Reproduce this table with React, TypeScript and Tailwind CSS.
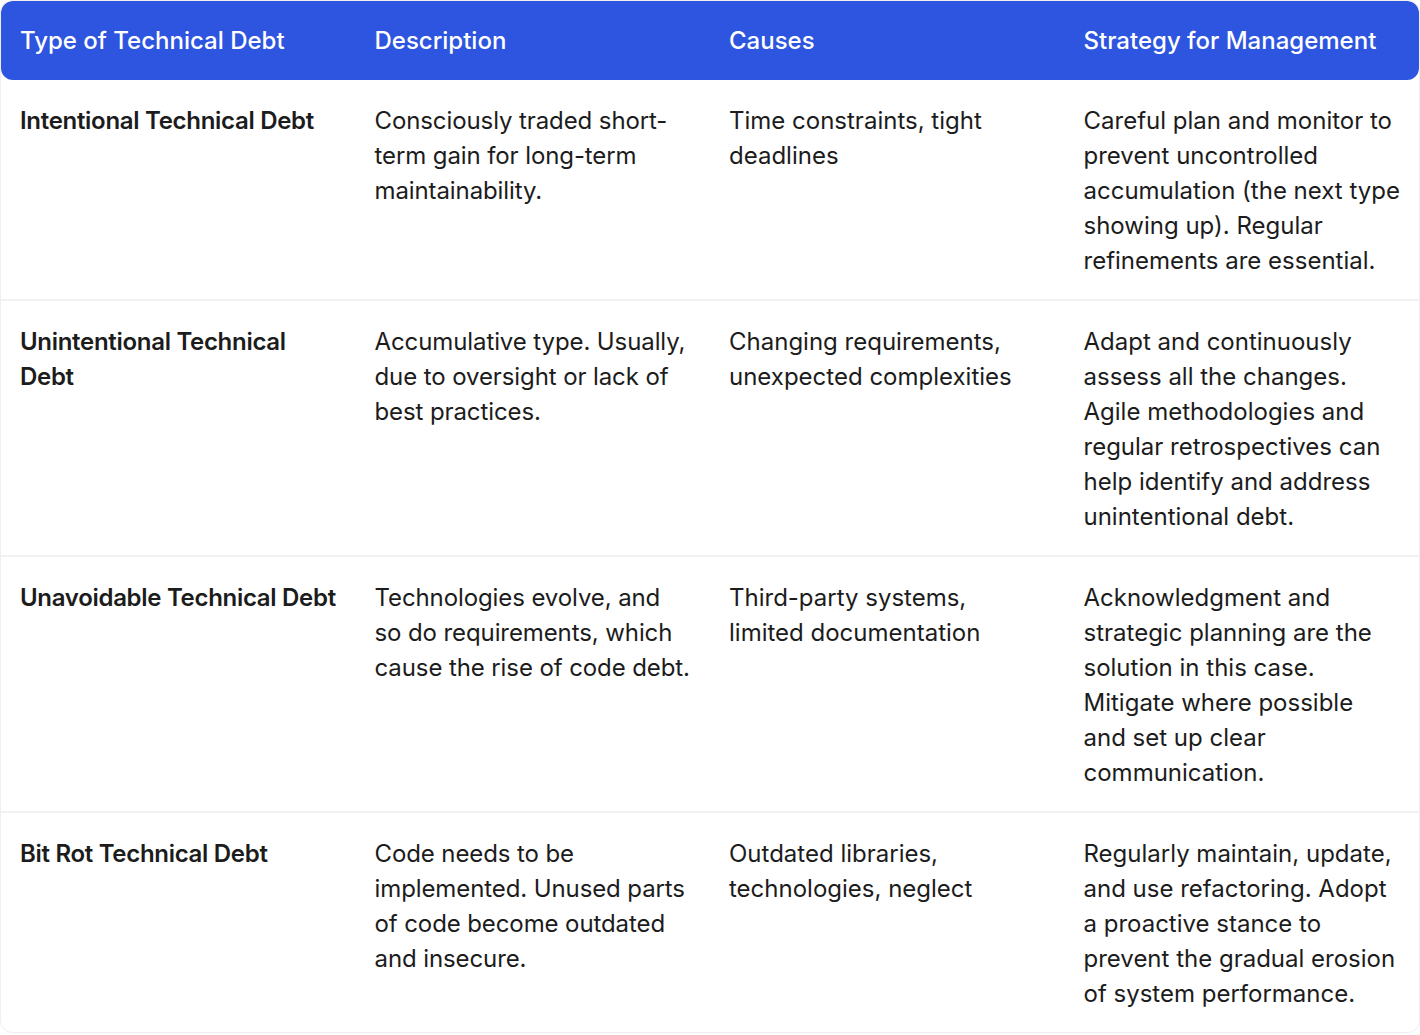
const rows = [
  {
    type: "Intentional Technical Debt",
    description: "Consciously traded short-term gain for long-term maintainability.",
    causes: "Time constraints, tight deadlines",
    strategy:
      "Careful plan and monitor to prevent uncontrolled accumulation (the next type showing up). Regular refinements are essential.",
  },
  {
    type: "Unintentional Technical Debt",
    description: "Accumulative type. Usually, due to oversight or lack of best practices.",
    causes: "Changing requirements, unexpected complexities",
    strategy:
      "Adapt and continuously assess all the changes. Agile methodologies and regular retrospectives can help identify and address unintentional debt.",
  },
  {
    type: "Unavoidable Technical Debt",
    description: "Technologies evolve, and so do requirements, which cause the rise of code debt.",
    causes: "Third-party systems, limited documentation",
    strategy:
      "Acknowledgment and strategic planning are the solution in this case. Mitigate where possible and set up clear communication.",
  },
  {
    type: "Bit Rot Technical Debt",
    description: "Code needs to be implemented. Unused parts of code become outdated and insecure.",
    causes: "Outdated libraries, technologies, neglect",
    strategy:
      "Regularly maintain, update, and use refactoring. Adopt a proactive stance to prevent the gradual erosion of system performance.",
  },
];

const headers = ["Type of Technical Debt", "Description", "Causes", "Strategy for Management"];

export default function App() {
  return (
    <div className="min-h-screen bg-white font-['Inter',sans-serif]">
      <div className="overflow-hidden rounded-xl border border-[#efefef] bg-white">
        <div className="grid h-[79px] grid-cols-4 items-center rounded-xl bg-[#2e55e0] text-[24px] font-[550] text-white">
          {headers.map((h) => (
            <div key={h} className="pl-[19px] pr-[18.5px]">
              {h}
            </div>
          ))}
        </div>
        {rows.map((row, idx) => (
          <div
            key={row.type}
            className={`grid grid-cols-4 text-[24px] leading-[35px] text-[#1c1c1c] ${
              idx > 0 ? "border-t-2 border-[#f2f2f2]" : ""
            }`}
          >
            <div className="pl-[19px] pr-[18.5px] pt-[23px] pb-[21px] font-semibold tracking-[-0.3px]">
              {row.type}
            </div>
            <div className="pl-[19px] pr-[18.5px] pt-[23px] pb-[21px] tracking-[-0.1px]">{row.description}</div>
            <div className="pl-[19px] pr-[18.5px] pt-[23px] pb-[21px]">{row.causes}</div>
            <div className="pl-[19px] pr-[18.5px] pt-[23px] pb-[21px]">{row.strategy}</div>
          </div>
        ))}
      </div>
    </div>
  );
}
